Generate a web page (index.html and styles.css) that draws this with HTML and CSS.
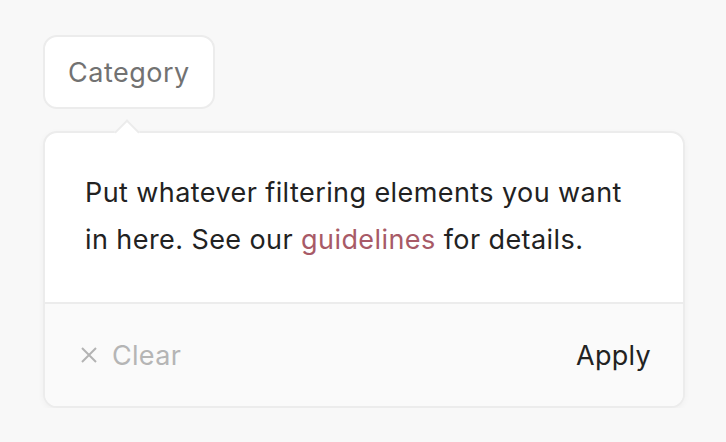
FILE: index.html
```html
<!DOCTYPE html>
<html>
<head>
<meta charset="utf-8">
<link rel="stylesheet" href="styles.css">
</head>
<body>
<div class="wrap">
  <button class="trigger">Category</button>
  <div class="popover">
    <span class="caret"></span>
    <div class="body">
      <p>Put whatever filtering elements you want in here. See our <a href="#">guidelines</a> for details.</p>
    </div>
    <div class="footer">
      <button class="clear"><svg width="18" height="18" viewBox="0 0 18 18"><path d="M2 2L16 16M16 2L2 16" stroke="#b3b3b3" stroke-width="2" fill="none"/></svg>Clear</button>
      <button class="apply">Apply</button>
    </div>
  </div>
</div>
</body>
</html>
```
FILE: styles.css
```css
html, body { margin: 0; padding: 0; background: #f8f8f8; }
body { font-family: Inter, "Noto Sans", sans-serif; }
.wrap { padding: 35px 0 0 43px; width: 642px; }
.trigger {
  box-sizing: border-box;
  height: 74px;
  padding: 0 23px;
  background: #fff;
  border: 2px solid #ececec;
  border-radius: 14px;
  font-family: inherit;
  font-size: 27px;
  letter-spacing: 0.5px;
  color: #727272;
  display: block;
}
.popover {
  position: relative;
  margin-top: 22px;
  background: #fff;
  border: 2px solid #ececec;
  border-radius: 14px;
  box-shadow: 0 2px 6px rgba(0,0,0,0.04);
}
.caret {
  position: absolute;
  top: -10px;
  left: 73px;
  width: 16px;
  height: 16px;
  background: #fff;
  border-top: 2px solid #ececec;
  border-left: 2px solid #ececec;
  transform: rotate(45deg);
}
.body { padding: 36px 40px 39px 40px; border-bottom: 2px solid #ececec; }
.body p { margin: 0; font-size: 27px; line-height: 47px; letter-spacing: 0.42px; color: #222; }
.body a { color: #a85a67; text-decoration: none; }
.footer {
  background: #fafafa;
  border-radius: 0 0 12px 12px;
  height: 102px;
  display: flex;
  align-items: center;
  justify-content: space-between;
  padding: 0 32px 0 35px;
}
.footer button { background: none; border: 0; font-family: inherit; font-size: 27px; letter-spacing: 0.3px; padding: 0; display: flex; align-items: center; }
.clear { color: #b5b5b5; gap: 14px; }
.apply { color: #222; }
```
